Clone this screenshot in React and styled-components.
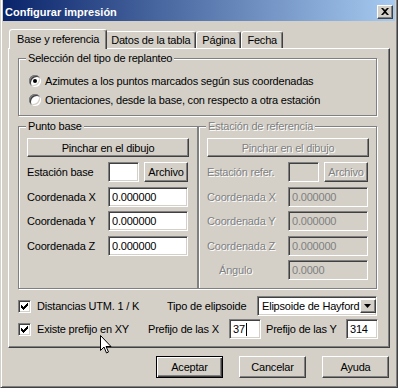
import React from "react";
import styled, { createGlobalStyle, css } from "styled-components";

const GlobalStyle = createGlobalStyle`
  html, body { margin: 0; padding: 0; background: #d4d0c8; }
  body {
    font-family: "Liberation Sans", Arial, sans-serif;
    font-size: 11px;
    letter-spacing: -0.2px;
    color: #000;
  }
  *, *::before, *::after { box-sizing: border-box; }
`;

const sunken = css`
  border: 1px solid;
  border-color: #808080 #fff #fff #808080;
  box-shadow: inset 1px 1px 0 #404040, inset -1px -1px 0 #d4d0c8;
`;

const raised = css`
  border: 1px solid;
  border-color: #fff #404040 #404040 #fff;
  box-shadow: inset -1px -1px 0 #808080;
`;

const disabledText = css`
  color: #808080;
  text-shadow: 1px 1px 0 #fff;
`;

const Window = styled.div`
  position: relative;
  width: 398px;
  height: 388px;
  display: flex;
  flex-direction: column;
  background: #d4d0c8;
  border-left: 1px solid #d4d0c8;
  border-right: 1px solid #404040;
  border-bottom: 1px solid #404040;
  box-shadow: inset 1px 0 0 #fff, inset -1px -1px 0 #808080;
  padding: 0 2px;
`;

const TitleBar = styled.div`
  height: 21px;
  display: flex;
  align-items: center;
  justify-content: space-between;
  padding: 2px 2px 0 2px;
  background: linear-gradient(90deg, #0a246a 0%, #a6caf0 100%);
  color: #fff;
  font-weight: bold;
  font-size: 11px;
  letter-spacing: 0;
`;

const CloseButton = styled.div`
  ${raised};
  width: 16px;
  height: 14px;
  background: #d4d0c8;
  display: flex;
  align-items: center;
  justify-content: center;
  padding-bottom: 1px;
`;

const TabStrip = styled.div`
  display: flex;
  align-items: flex-end;
  height: 19px;
  margin: 8px 0 0 5px;
  padding-left: 3px;
  position: relative;
  z-index: 1;
`;

const Tab = styled.div`
  height: ${(p) => (p.$active ? 20 : 17)}px;
  margin: ${(p) => (p.$active ? "0 -2px -1px -2px" : "0")};
  padding: ${(p) => (p.$active ? "0 7px" : "0 5px")};
  display: flex;
  align-items: center;
  background: #d4d0c8;
  border: 1px solid;
  border-bottom: none;
  border-color: #fff #404040 transparent #fff;
  border-radius: 3px 3px 0 0;
  box-shadow: inset -1px 0 0 #808080;
  padding-bottom: ${(p) => (p.$active ? 2 : 0)}px;
  z-index: ${(p) => (p.$active ? 2 : 0)};
`;

const Panel = styled.div`
  width: 382px;
  height: 300px;
  margin-left: 5px;
  border: 1px solid;
  border-color: #fff #404040 #404040 #fff;
  box-shadow: inset -1px -1px 0 #808080;
  padding: 3px 0 0 9px;
  display: flex;
  flex-direction: column;
`;

const Group = styled.fieldset`
  margin: 0;
  min-width: 0;
  width: ${(p) => p.$w}px;
  height: ${(p) => p.$h}px;
  padding: 0 8px;
  border: 1px solid #808080;
  box-shadow: inset 1px 1px 0 #fff, 1px 1px 0 #fff;
  display: flex;
  flex-direction: column;
`;

const Legend = styled.legend`
  padding: 0 2px;
  margin-left: -1px;
  line-height: 13px;
  background: #d4d0c8;
  ${(p) => p.$disabled && disabledText};
`;

const GroupRow = styled.div`
  display: flex;
  margin-top: 4px;
`;

const RadioList = styled.div`
  display: flex;
  flex-direction: column;
  margin: 6px 0 0 2px;
`;

const RadioRow = styled.div`
  height: 19px;
  display: flex;
  align-items: center;
  gap: 4px;
  white-space: nowrap;
`;

const Radio = styled.span`
  position: relative;
  width: 12px;
  height: 12px;
  flex: none;
  border-radius: 50%;
  background: #fff;
  box-shadow: inset 1px 1px 0 #808080, inset -1px -1px 0 #fff,
    inset 2px 2px 0 #404040, inset -2px -2px 0 #d4d0c8;
  &::after {
    content: "";
    display: ${(p) => (p.$checked ? "block" : "none")};
    position: absolute;
    left: 4px;
    top: 4px;
    width: 4px;
    height: 4px;
    border-radius: 50%;
    background: #000;
  }
`;

const Button = styled.div`
  ${raised};
  width: ${(p) => p.$w}px;
  height: ${(p) => p.$h || 22}px;
  flex: none;
  background: #d4d0c8;
  display: flex;
  align-items: center;
  justify-content: center;
  white-space: nowrap;
  ${(p) => p.$disabled && disabledText};
  ${(p) =>
    p.$default &&
    css`
      border: 1px solid #000;
      box-shadow: inset 1px 1px 0 #fff, inset -1px -1px 0 #404040,
        inset -2px -2px 0 #808080;
    `};
`;

const FieldRow = styled.div`
  display: flex;
  align-items: center;
  height: 20px;
  margin-top: ${(p) => p.$mt}px;
`;

const FieldLabel = styled.span`
  width: ${(p) => p.$w || 81}px;
  padding-left: ${(p) => p.$indent || 0}px;
  flex: none;
  white-space: nowrap;
  ${(p) => p.$disabled && disabledText};
`;

const Field = styled.div`
  ${sunken};
  width: ${(p) => p.$w}px;
  height: ${(p) => p.$h || 20}px;
  flex: none;
  display: flex;
  align-items: center;
  padding: 0 3px;
  white-space: nowrap;
  background: ${(p) => (p.$disabled ? "#d4d0c8" : "#fff")};
  color: ${(p) => (p.$disabled ? "#808080" : "#000")};
  margin-right: ${(p) => p.$mr || 0}px;
`;

const Caret = styled.span`
  width: 1px;
  height: 13px;
  background: #000;
  margin-left: 1px;
`;

const Options = styled.div`
  display: flex;
  flex-direction: column;
  margin-top: 7px;
`;

const OptionRow = styled.div`
  display: flex;
  align-items: center;
  height: ${(p) => p.$h}px;
  margin-top: ${(p) => p.$mt || 0}px;
`;

const CheckItem = styled.label`
  width: ${(p) => p.$w}px;
  flex: none;
  display: flex;
  align-items: center;
  gap: 6px;
  white-space: nowrap;
`;

const CheckBox = styled.span`
  ${sunken};
  width: 13px;
  height: 13px;
  flex: none;
  background: #fff;
  display: flex;
  align-items: center;
  justify-content: center;
`;

const Combo = styled.div`
  ${sunken};
  width: ${(p) => p.$w}px;
  height: 20px;
  flex: none;
  background: #fff;
  display: flex;
  align-items: center;
  justify-content: space-between;
  padding: 2px 2px 2px 4px;
  white-space: nowrap;
`;

const ComboButton = styled.div`
  ${raised};
  width: 16px;
  height: 100%;
  flex: none;
  background: #d4d0c8;
  display: flex;
  align-items: center;
  justify-content: center;
`;

const Footer = styled.div`
  display: flex;
  justify-content: flex-end;
  gap: 16px;
  margin: 8px 6px 0 0;
`;

const Cursor = styled.svg`
  position: absolute;
  left: 99px;
  top: 335px;
`;

const checkPath =
  "M0 2h1v1h1v1h1V3h1V2h1V1h1V0h1v3H6v1H5v1H4v1H3v1H2V6H1V5H0z";

const CoordinateRows = ({ prefix, disabled }) => (
  <>
    <FieldRow $mt={5}>
      <FieldLabel $disabled={disabled}>{prefix}</FieldLabel>
      <Field $w={31} $mr={5} $disabled={disabled} />
      <Button $w={44} $h={20} $disabled={disabled}>
        Archivo
      </Button>
    </FieldRow>
    {["X", "Y", "Z"].map((axis) => (
      <FieldRow key={axis} $mt={axis === "Y" ? 4 : 5}>
        <FieldLabel $disabled={disabled}>Coordenada {axis}</FieldLabel>
        <Field $w={80} $disabled={disabled}>
          0.000000
        </Field>
      </FieldRow>
    ))}
  </>
);

export default function App() {
  return (
    <>
      <GlobalStyle />
      <Window>
        <TitleBar>
          <span>Configurar impresión</span>
          <CloseButton>
            <svg width="8" height="7" viewBox="0 0 8 7">
              <path d="M0 0h2l2 2 2-2h2L5 3.5 8 7H6L4 5 2 7H0l3-3.5z" fill="#000" />
            </svg>
          </CloseButton>
        </TitleBar>

        <TabStrip>
          <Tab $active>Base y referencia</Tab>
          <Tab>Datos de la tabla</Tab>
          <Tab>Página</Tab>
          <Tab>Fecha</Tab>
        </TabStrip>

        <Panel>
          <Group $w={359} $h={64}>
            <Legend>Selección del tipo de replanteo</Legend>
            <RadioList>
              <RadioRow>
                <Radio $checked />
                Azimutes a los puntos marcados según sus coordenadas
              </RadioRow>
              <RadioRow>
                <Radio />
                Orientaciones, desde la base, con respecto a otra estación
              </RadioRow>
            </RadioList>
          </Group>

          <GroupRow>
            <Group $w={180} $h={169}>
              <Legend>Punto base</Legend>
              <Button $w={162} $h={19} style={{ marginTop: 5 }}>
                Pinchar en el dibujo
              </Button>
              <CoordinateRows prefix="Estación base" />
            </Group>
            <Group $w={179} $h={169}>
              <Legend $disabled>Estación de referencia</Legend>
              <Button $w={162} $h={19} $disabled style={{ marginTop: 5 }}>
                Pinchar en el dibujo
              </Button>
              <CoordinateRows prefix="Estación refer." disabled />
              <FieldRow $mt={4}>
                <FieldLabel $disabled $indent={12}>
                  Ángulo
                </FieldLabel>
                <Field $w={80} $disabled>
                  0.0000
                </Field>
              </FieldRow>
            </Group>
          </GroupRow>

          <Options>
            <OptionRow $h={20}>
              <CheckItem $w={149}>
                <CheckBox>
                  <svg width="7" height="7" viewBox="0 0 7 7">
                    <path d={checkPath} fill="#000" />
                  </svg>
                </CheckBox>
                Distancias UTM. 1 / K
              </CheckItem>
              <FieldLabel $w={90}>Tipo de elipsoide</FieldLabel>
              <Combo $w={120}>
                Elipsoide de Hayford
                <ComboButton>
                  <svg width="7" height="4" viewBox="0 0 7 4">
                    <path d="M0 0h7L3.5 4z" fill="#000" />
                  </svg>
                </ComboButton>
              </Combo>
            </OptionRow>
            <OptionRow $h={20} $mt={3}>
              <CheckItem $w={130}>
                <CheckBox>
                  <svg width="7" height="7" viewBox="0 0 7 7">
                    <path d={checkPath} fill="#000" />
                  </svg>
                </CheckBox>
                Existe prefijo en XY
              </CheckItem>
              <FieldLabel $w={81}>Prefijo de las X</FieldLabel>
              <Field $w={32} $mr={5}>
                37
                <Caret />
              </Field>
              <FieldLabel $w={80}>Prefijo de las Y</FieldLabel>
              <Field $w={32}>314</Field>
            </OptionRow>
          </Options>
        </Panel>

        <Footer>
          <Button $w={67} $default>
            Aceptar
          </Button>
          <Button $w={67}>Cancelar</Button>
          <Button $w={67}>Ayuda</Button>
        </Footer>

        <Cursor width="12" height="20" viewBox="0 0 12 20">
          <path
            d="M0.5 0.5v15l3.5-3.5 2.5 6 2-1-2.5-5.5h5z"
            fill="#fff"
            stroke="#000"
            strokeWidth="1"
            strokeLinejoin="miter"
          />
        </Cursor>
      </Window>
    </>
  );
}
